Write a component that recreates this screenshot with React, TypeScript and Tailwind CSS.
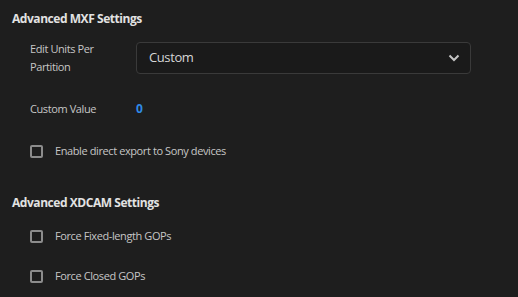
import React from "react";

function Checkbox({ label }: { label: string }) {
  return (
    <div className="flex items-center gap-[12px]">
      <span className="h-[13px] w-[13px] rounded-[2px] border-2 border-[#8c8c8c]" />
      <span className="text-[11px] tracking-[-0.4px] text-[#c6c6c6]">{label}</span>
    </div>
  );
}

export default function App() {
  return (
    <div
      className="h-[297px] w-[518px] overflow-hidden bg-[#1e1e1e] pl-[12px]"
      style={{ fontFamily: '"Open Sans", "Noto Sans", sans-serif' }}
    >
      <h2 className="mt-[10px] h-[18px] text-[12px] font-bold leading-[18px] tracking-[-0.45px] text-[#e2e2e2]">
        Advanced MXF Settings
      </h2>
      <div className="pl-[18px]">
        <div className="mt-[12px] flex h-[36px] items-center">
          <div className="w-[106px] text-[11px] leading-[18px] tracking-[-0.4px] text-[#c6c6c6]">
            Edit Units Per
            <br />
            Partition
          </div>
          <div className="flex h-[32px] w-[335px] items-center justify-between rounded-[4px] border border-[#3a3a3a] bg-[#1a1a1a] pl-[12px] pr-[10px]">
            <span className="text-[13px] tracking-[-0.4px] text-[#d6d6d6]">Custom</span>
            <svg width="12" height="8" viewBox="0 0 12 8" fill="none">
              <path d="M1.5 1.5 6 6 10.5 1.5" stroke="#c4c4c4" strokeWidth="2" />
            </svg>
          </div>
        </div>
        <div className="mt-[23px] flex h-[20px] items-center">
          <div className="w-[106px] text-[11px] tracking-[-0.4px] text-[#c6c6c6]">Custom Value</div>
          <div className="text-[12px] font-bold text-[#2f8ae6]">0</div>
        </div>
        <div className="mt-[24px] h-[20px]">
          <Checkbox label="Enable direct export to Sony devices" />
        </div>
      </div>
      <h2 className="mt-[31px] h-[18px] text-[12px] font-bold leading-[18px] tracking-[-0.45px] text-[#e2e2e2]">
        Advanced XDCAM Settings
      </h2>
      <div className="pl-[18px]">
        <div className="mt-[14px] flex h-[20px] items-center">
          <Checkbox label="Force Fixed-length GOPs" />
        </div>
        <div className="mt-[20px] flex h-[20px] items-center">
          <Checkbox label="Force Closed GOPs" />
        </div>
      </div>
    </div>
  );
}
